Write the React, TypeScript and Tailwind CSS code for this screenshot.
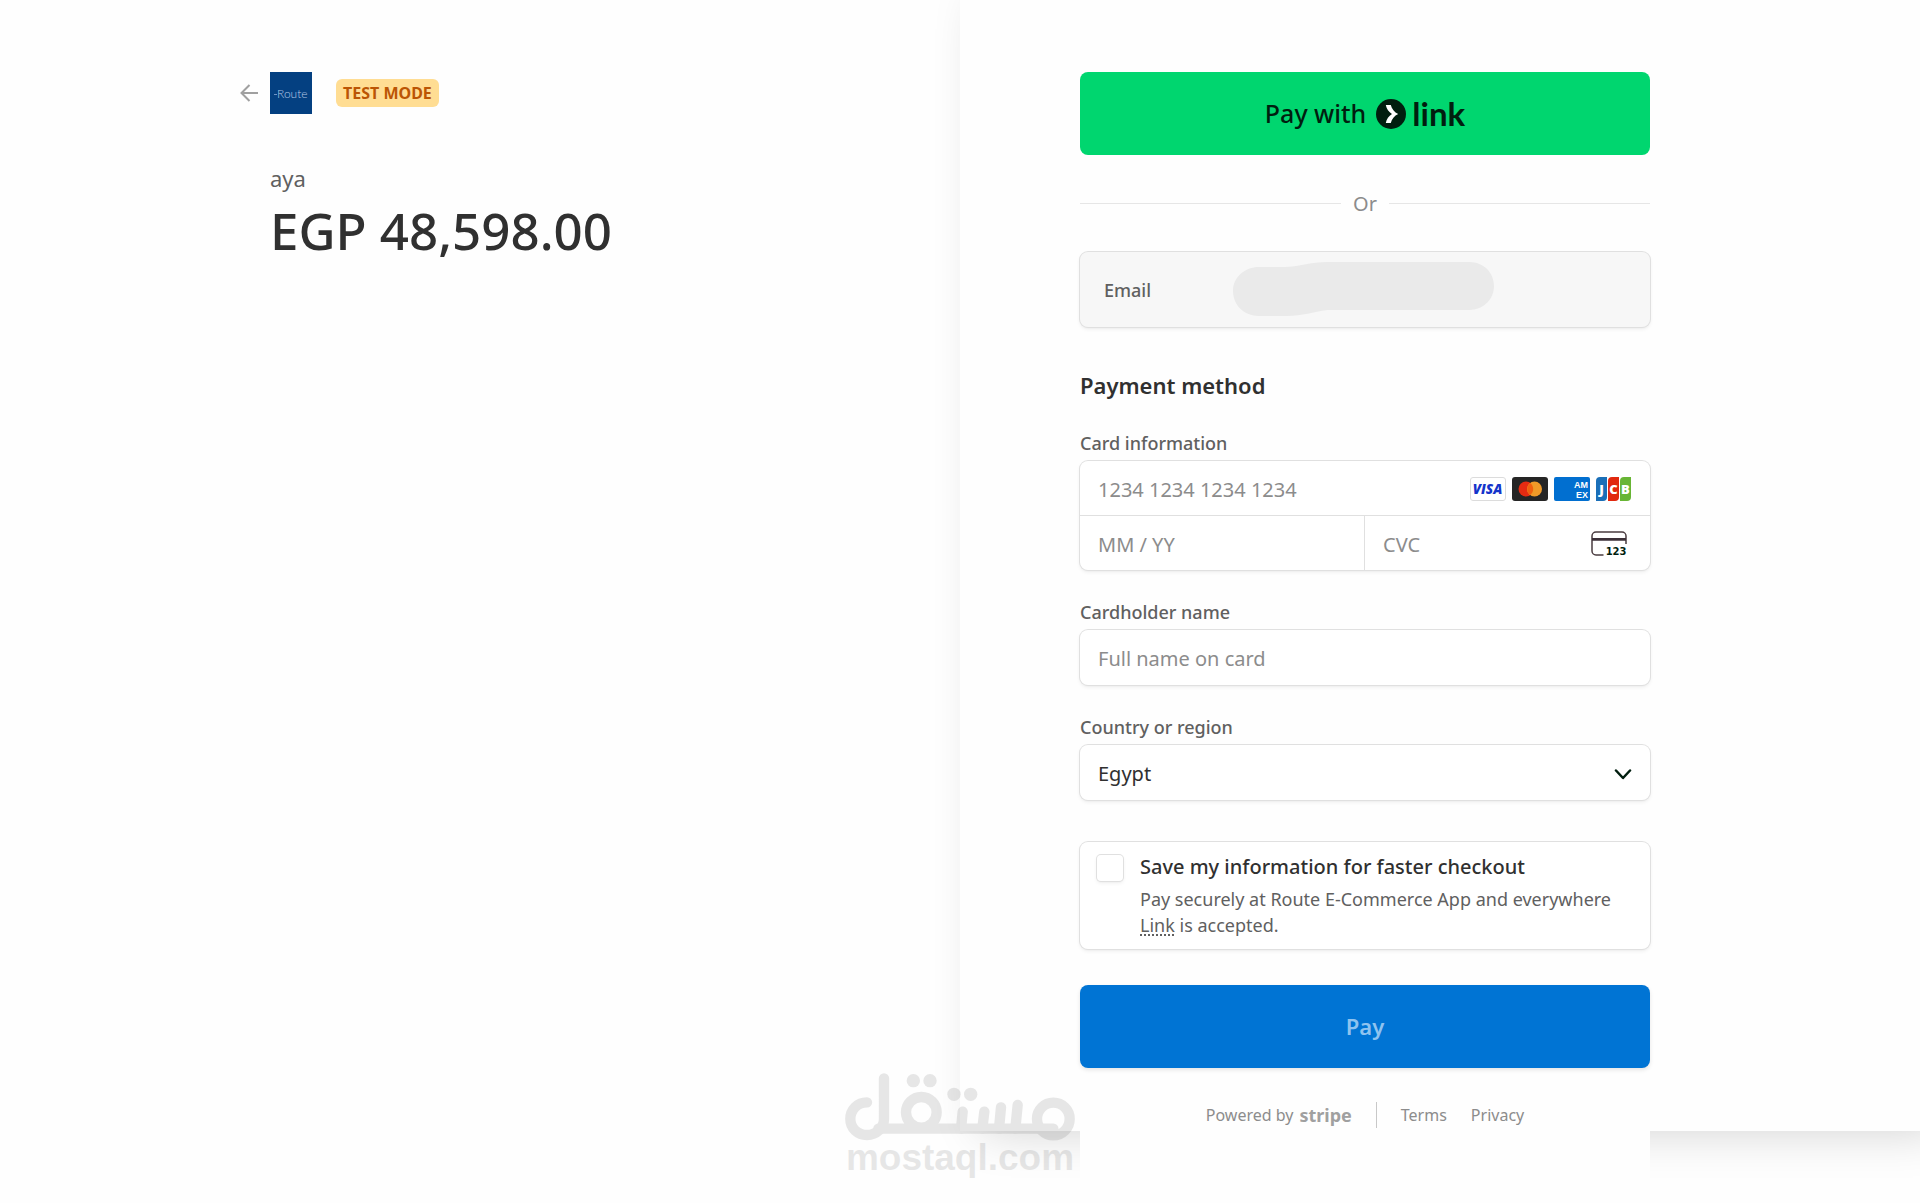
import React, { FC, ReactNode } from "react";

const fieldShadow = "shadow-[0_0_0_1px_#e0e0e0,0_2px_4px_0_rgba(0,0,0,0.07),0_1px_2px_0_rgba(0,0,0,0.05)]";
const inputStyle = "w-full bg-transparent px-[18px] pt-0.5 text-[20px] text-[#303030] placeholder:text-[#8c8c8c] outline-none";
const labelStyle = "block text-[18px] leading-6 font-medium text-[#606060]";

export default function App() {
  return (
    <main className="relative grid min-h-screen grid-cols-2 bg-[#fefefe] font-['Noto_Sans',sans-serif]">
      <OrderSummary />
      <section className="relative">
        <div className="absolute inset-x-0 top-0 bottom-[72px] bg-[#fefefe] shadow-[22px_0_45px_0_rgba(0,0,0,0.18)]" />
        <PaymentForm />
      </section>
      <Watermark />
    </main>
  );
}

const OrderSummary: FC = () => {
  return (
    <section className="ml-auto w-full max-w-[720px] pt-[72px]">
      <header className="flex items-center">
        <a href="#back" aria-label="Back" className="flex items-center">
          <svg width="30" height="18" viewBox="0 0 30 18" fill="none" stroke="#a0a0a0" strokeWidth="2">
            <path d="M18 9H1.5M9.5 1 1.5 9l8 8" />
          </svg>
          <RouteLogo />
        </a>
        <span className="ml-6 rounded-md bg-[#ffdd93] px-[7px] text-[16px] leading-7 font-bold text-[#bb5504]">
          TEST MODE
        </span>
      </header>
      <div className="pl-[30px]">
        <p className="mt-12 text-[22px] leading-8 text-[#606060]">aya</p>
        <h1 className="mt-1.5 text-[51px] leading-[60px] font-medium text-[#303030]">EGP 48,598.00</h1>
      </div>
    </section>
  );
};

const PaymentForm: FC = () => {
  return (
    <form className="relative ml-[120px] min-h-screen w-full max-w-[570px] bg-[#fefefe] pt-[72px]">
      <button type="button" className="flex h-[83px] w-full items-center justify-center rounded-lg bg-[#00d66f] text-[25px] font-medium text-[#011e0f]">
        Pay with
        <svg className="ml-2.5" width="30" height="30" viewBox="0 0 30 30">
          <circle cx="15" cy="15" r="15" fill="#011e0f" />
          <path d="M9.8 6h5c.9 4 3.6 7.2 7.4 9-3.8 1.8-6.5 5-7.4 9h-5c.7-3.7 3-7 6.2-9-3.2-2-5.5-5.3-6.2-9z" fill="#fff" />
        </svg>
        <span className="ml-1.5 pb-0.5 font-['Lato',sans-serif] text-[33px] leading-8 font-bold">link</span>
      </button>

      <div className="mt-9 flex items-center gap-3 text-[20px] leading-[25px] text-[#8c8c8c]">
        <span className="h-px flex-1 bg-[#e6e6e6]" />
        Or
        <span className="h-px flex-1 bg-[#e6e6e6]" />
      </div>

      <div className={`relative mt-9 flex h-[75px] items-center rounded-lg bg-[#f7f7f7] pl-6 ${fieldShadow}`}>
        <label htmlFor="email" className={`w-32 ${labelStyle}`}>Email</label>
        <input id="email" type="email" readOnly className="min-w-0 flex-1 bg-transparent outline-none" />
        <svg className="absolute top-2.5 left-[153px]" width="261" height="54" viewBox="0 0 262 54" fill="#eaeaea">
          <path d="M0 29C0 15 12 5 26 5h26c12 0 26-5 43-5h142c15 0 25 11 25 24s-10 24-25 24H95c-15 2-25 6-41 6H26C11 54 0 43 0 29z" />
        </svg>
      </div>

      <h2 className="mt-11 text-[22px] leading-7 font-semibold text-[#303030]">Payment method</h2>

      <fieldset className="mt-8">
        <legend className={labelStyle}>Card information</legend>
        <div className={`mt-1.5 grid grid-cols-2 rounded-lg bg-white ${fieldShadow}`}>
          <div className="col-span-2 flex h-[55px] items-center border-b border-[#e0e0e0] pr-[18px]">
            <input aria-label="Card number" placeholder="1234 1234 1234 1234" className={`h-full ${inputStyle}`} />
            <CardBrands />
          </div>
          <input aria-label="Expiration" placeholder="MM / YY" className={`h-[54px] border-r border-[#e0e0e0] ${inputStyle}`} />
          <div className="flex h-[54px] items-center pr-[23px]">
            <input aria-label="CVC" placeholder="CVC" className={`h-full ${inputStyle}`} />
            <CvcIcon />
          </div>
        </div>
      </fieldset>

      <Field id="name" label="Cardholder name">
        <input id="name" placeholder="Full name on card" className={`h-[55px] ${inputStyle}`} />
      </Field>

      <Field id="country" label="Country or region">
        <select id="country" defaultValue="Egypt" className={`h-[55px] appearance-none ${inputStyle}`}>
          <option>Egypt</option>
        </select>
        <svg className="pointer-events-none absolute top-6 right-[18px]" width="18" height="12" viewBox="0 0 18 12"
          fill="none" stroke="#011e0f" strokeWidth="2.5" strokeLinecap="round" strokeLinejoin="round">
          <path d="M2 1.5l7 7.5 7-7.5" />
        </svg>
      </Field>

      <div className={`mt-[42px] flex gap-[17px] rounded-lg bg-white pt-[13px] pr-4 pb-[11px] pl-[17px] ${fieldShadow}`}>
        <input id="save" type="checkbox" className={`size-[26px] shrink-0 appearance-none rounded-sm bg-white ${fieldShadow}`} />
        <div>
          <label htmlFor="save" className="block text-[20px] leading-6 font-medium text-[#303030]">
            Save my information for faster checkout
          </label>
          <p className="mt-[7px] text-[18px] leading-[26px] text-[#606060]">
            Pay securely at Route E-Commerce App and everywhere{" "}
            <a href="#link" className="underline decoration-dotted decoration-2 underline-offset-2">Link</a> is accepted.
          </p>
        </div>
      </div>

      <button type="submit" className="mt-9 h-[83px] w-full rounded-lg bg-[#0074d4] text-[22px] font-semibold text-[#8fc3ef] shadow-[0_2px_4px_0_rgba(0,0,0,0.1)]">
        Pay
      </button>

      <footer className="mt-[34px] flex items-center justify-center text-[16px] leading-[26px] text-[#8c8c8c]">
        <a href="#stripe" className="flex items-center gap-1.5 border-r border-[#c8c8c8] pr-6">
          Powered by
          <span className="text-[18px] font-bold text-[#a0a0a0]">stripe</span>
        </a>
        <a href="#terms" className="ml-6">Terms</a>
        <a href="#privacy" className="ml-6">Privacy</a>
      </footer>
    </form>
  );
};

type FieldProps = {
  id: string;
  label: string;
  children: ReactNode;
};

const Field = ({ id, label, children }: FieldProps) => {
  return (
    <div className="mt-[30px]">
      <label htmlFor={id} className={labelStyle}>{label}</label>
      <div className={`relative mt-1.5 flex rounded-lg bg-white ${fieldShadow}`}>{children}</div>
    </div>
  );
};

const RouteLogo: FC = () => {
  return (
    <svg width="42" height="42" viewBox="0 0 42 42" className="font-['Lato',sans-serif]">
      <rect width="42" height="42" fill="#044081" />
      <path d="M4 22.5h3" stroke="#6f93c4" />
      <text x="7" y="25.5" fontSize="12" fontWeight="300" fill="#b4c8e6">Route</text>
    </svg>
  );
};

const CardBrands: FC = () => {
  return (
    <div className="flex shrink-0 gap-1.5 pt-0.5 font-['Open_Sans',sans-serif]">
      <svg width="36" height="24" viewBox="0 0 36 24">
        <rect x=".5" y=".5" width="35" height="23" rx="2.5" fill="#fff" stroke="#dcdcdc" />
        <text x="17.5" y="17" textAnchor="middle" fontSize="13.5" fontWeight="800" fontStyle="italic" fill="#1434cb">VISA</text>
      </svg>
      <svg width="36" height="24" viewBox="0 0 36 24">
        <rect width="36" height="24" rx="3" fill="#252525" />
        <circle cx="14" cy="12" r="7.5" fill="#e52b12" />
        <circle cx="22.5" cy="12" r="7.5" fill="#f09a28" />
        <path d="M18.2 6a7.5 7.5 0 0 1 0 12 7.5 7.5 0 0 1 0-12z" fill="#f0600f" />
      </svg>
      <svg width="36" height="24" viewBox="0 0 36 24" className="font-['Liberation_Sans',sans-serif]">
        <rect width="36" height="24" rx="2" fill="#016fd0" />
        <g fill="#fff" fontSize="9" fontWeight="700">
          <text x="20" y="11">AM</text>
          <text x="22" y="20.5">EX</text>
        </g>
      </svg>
      <svg width="36" height="24" viewBox="0 0 36 24">
        <path d="M4 0h7v20a4 4 0 0 1-4 4H0V4a4 4 0 0 1 4-4z" fill="#1a6fb8" />
        <path d="M16 0h7v20a4 4 0 0 1-4 4h-7V4a4 4 0 0 1 4-4z" fill="#e1290f" />
        <path d="M28 0h7v20a4 4 0 0 1-4 4h-7V4a4 4 0 0 1 4-4z" fill="#68b535" />
        <g fill="#fff" fontSize="13" fontWeight="800" textAnchor="middle">
          <text x="5.5" y="16.5">J</text>
          <text x="17.5" y="16.5">C</text>
          <text x="29.5" y="16.5">B</text>
        </g>
      </svg>
    </div>
  );
};

const CvcIcon: FC = () => {
  return (
    <svg className="mt-0.5 shrink-0 font-['DejaVu_Sans',sans-serif]" width="36" height="26" viewBox="0 0 36 26">
      <path d="M12.5 24H5a4 4 0 0 1-4-4V5a4 4 0 0 1 4-4h26a4 4 0 0 1 4 4v8" fill="none" stroke="#4a3c40" strokeWidth="1.5" />
      <path d="M1 7h34v2.8H1z" fill="#3c3038" />
      <text x="35.5" y="24" textAnchor="end" fontSize="10" fontWeight="700" fill="#011e0f">123</text>
    </svg>
  );
};

const Watermark: FC = () => {
  return (
    <div className="pointer-events-none absolute bottom-6 left-1/2 w-[230px] -translate-x-1/2 text-black opacity-[0.09]">
      <svg width="230" height="68" viewBox="75 68 690 204" fill="none" stroke="currentColor" strokeWidth="31" strokeLinecap="round">
        <path d="M141 156C113 156 91 178 91 206s22 48 50 48 51-22 51-48V84" />
        <path d="M175 235h525" />
        <circle cx="304" cy="186" r="46" />
        <path d="M428 184l-5 51M493 184l-6 51M543 171l-6 64M593 164l-7 71" />
        <circle cx="700" cy="206" r="49" />
        <g fill="currentColor" stroke="none">
          <circle cx="280" cy="91" r="20" />
          <circle cx="330" cy="91" r="20" />
          <circle cx="402" cy="132" r="20" />
          <circle cx="452" cy="132" r="20" />
        </g>
      </svg>
      <p className="-mt-1 text-center font-['Liberation_Sans',sans-serif] text-[37px] leading-[42px] font-bold">mostaql.com</p>
    </div>
  );
};
